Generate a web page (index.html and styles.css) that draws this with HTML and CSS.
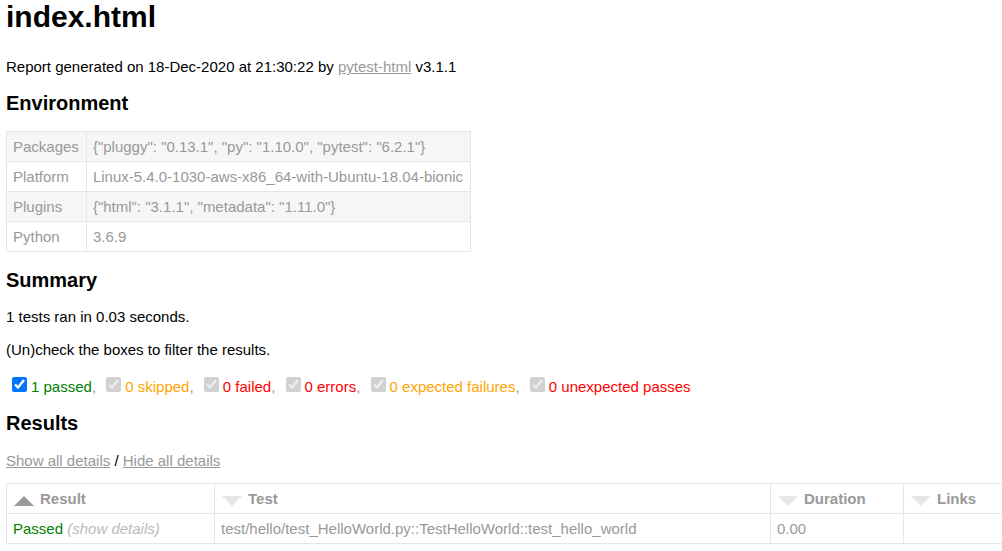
FILE: index.html
```html
<!DOCTYPE html>
<html>
<head>
<meta charset="utf-8">
<title>Test Report</title>
<link rel="stylesheet" href="styles.css">
</head>
<body>
<h1>index.html</h1>
<p>Report generated on 18-Dec-2020 at 21:30:22 by <a href="#">pytest-html</a> v3.1.1</p>
<h2>Environment</h2>
<table class="env">
  <tr><td>Packages</td><td>{"pluggy": "0.13.1", "py": "1.10.0", "pytest": "6.2.1"}</td></tr>
  <tr><td>Platform</td><td>Linux-5.4.0-1030-aws-x86_64-with-Ubuntu-18.04-bionic</td></tr>
  <tr><td>Plugins</td><td>{"html": "3.1.1", "metadata": "1.11.0"}</td></tr>
  <tr><td>Python</td><td>3.6.9</td></tr>
</table>
<h2>Summary</h2>
<p>1 tests ran in 0.03 seconds. </p>
<p>(Un)check the boxes to filter the results.</p>
<div class="filters"><input type="checkbox" checked><span class="passed">1 passed</span>, <input type="checkbox" checked disabled><span class="skipped">0 skipped</span>, <input type="checkbox" checked disabled><span class="failed">0 failed</span>, <input type="checkbox" checked disabled><span class="error">0 errors</span>, <input type="checkbox" checked disabled><span class="xfailed">0 expected failures</span>, <input type="checkbox" checked disabled><span class="xpassed">0 unexpected passes</span></div>
<h2>Results</h2>
<p class="details-links"><a href="#">Show all details</a> / <a href="#">Hide all details</a></p>
<table class="results">
  <colgroup>
    <col class="c-result"><col class="c-test"><col class="c-duration"><col class="c-links">
  </colgroup>
  <thead>
    <tr>
      <th class="asc"><div class="sort-icon"></div>Result</th>
      <th class="inactive"><div class="sort-icon"></div>Test</th>
      <th class="inactive"><div class="sort-icon"></div>Duration</th>
      <th class="inactive"><div class="sort-icon"></div>Links</th>
    </tr>
  </thead>
  <tbody>
    <tr>
      <td><span class="passed">Passed</span> <span class="expander">(show details)</span></td>
      <td>test/hello/test_HelloWorld.py::TestHelloWorld::test_hello_world</td>
      <td>0.00</td>
      <td></td>
    </tr>
  </tbody>
</table>
</body>
</html>
```

FILE: styles.css
```css
html {
  overflow: hidden;
}
body {
  font-family: "Liberation Sans", Arial, Helvetica, sans-serif;
  font-size: 15px;
  color: #999;
  margin: 0 6px;
  min-width: 1000px;
}
h1 {
  font-size: 30px;
  color: #000;
  margin: 0 0 24px;
}
h2 {
  font-size: 20px;
  color: #000;
  margin: 16.6px 0;
}
p {
  color: #000;
  margin: 16px 0;
}
.details-links {
  margin-bottom: 14px;
}
a {
  color: #999;
}
table {
  border-collapse: collapse;
}
.env td {
  padding: 6px 7px 6px 6px;
  line-height: 17px;
  border: 1px solid #e6e6e6;
}
.env tr:nth-child(odd) {
  background-color: #f6f6f6;
}
.filters input {
  width: 15px;
  height: 15px;
  margin: 3px 4px 3px 6px;
}
.passed { color: green; }
.skipped, .xfailed { color: orange; }
.failed, .error, .xpassed { color: red; }
.results {
  width: 100%;
  table-layout: fixed;
  border: 1px solid #e6e6e6;
}
.c-result { width: 208px; }
.c-test { width: 556px; }
.c-duration { width: 133px; }
.results th,
.results td {
  padding: 6px;
  line-height: 17px;
  border: 1px solid #e6e6e6;
  text-align: left;
}
.results th {
  font-weight: bold;
}
.sort-icon {
  float: left;
  width: 0;
  height: 0;
  margin: 6px 6px 0 1px;
  border-left: 10px solid transparent;
  border-right: 10px solid transparent;
}
.asc .sort-icon {
  border-bottom: 10px solid #999;
}
.inactive .sort-icon {
  border-top: 10px solid #e6e6e6;
}
.expander {
  color: #bbb;
  font-style: italic;
}
```
